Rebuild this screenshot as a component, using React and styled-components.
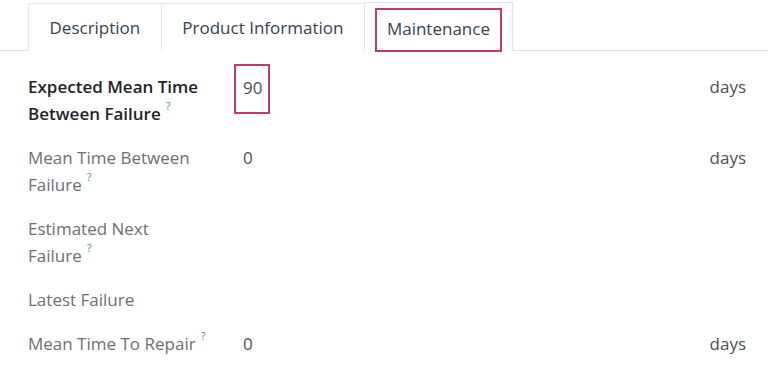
import React from 'react'
import styled, { createGlobalStyle } from 'styled-components'

const GlobalStyle = createGlobalStyle`
    body {
        margin: 0;
        background: #fff;
        font-family: "Open Sans", "Noto Sans", sans-serif;
    }
`

const fields = [
    { label: 'Expected Mean Time Between Failure', help: true, value: '90', unit: 'days', strong: true, focused: true },
    { label: 'Mean Time Between Failure', help: true, value: '0', unit: 'days' },
    { label: 'Estimated Next Failure', help: true },
    { label: 'Latest Failure' },
    { label: 'Mean Time To Repair', help: true, value: '0', unit: 'days', wide: true },
]

function FieldLabel({ text, help }) {
    const words = text.split(' ')
    const last = words.pop()
    return (
        <LabelText>
            {words.join(' ')}{' '}
            <NoWrap>
                {last}
                {help && <Help>?</Help>}
            </NoWrap>
        </LabelText>
    )
}

function App() {
    return (
        <Page>
            <GlobalStyle />
            <Tabs>
                <Tab>Description</Tab>
                <Tab>Product Information</Tab>
                <Tab active>
                    <Highlight>Maintenance</Highlight>
                </Tab>
            </Tabs>
            <Form>
                {fields.map((f) => (
                    <Row key={f.label}>
                        <Label strong={f.strong} wide={f.wide}>
                            <FieldLabel text={f.label} help={f.help} />
                        </Label>
                        <Value focused={f.focused}>{f.value}</Value>
                        <Unit>{f.unit}</Unit>
                    </Row>
                ))}
            </Form>
        </Page>
    )
}

export default App

const Page = styled.div`
    width: 768px;
    height: 382px;
    overflow: hidden;
`

const Tabs = styled.div`
    display: flex;
    padding: 2px 0 0 28px;
    border-bottom: 1px solid #dee2e6;
    height: 48px;
    box-sizing: content-box;
`

const Tab = styled.div`
    display: flex;
    align-items: center;
    justify-content: center;
    padding: ${(p) => (p.active ? '0 10px' : '0 20.5px')};
    margin-top: ${(p) => (p.active ? '0' : '1px')};
    border: 1px solid #e6e8eb;
    border-bottom: none;
    border-right: ${(p) => (p.active ? '1px solid #e6e8eb' : 'none')};
    font-size: 17px;
    color: #374151;
    background: #fff;
    margin-bottom: -1px;
    ${(p) => p.active && 'border-color: #dee2e6;'}
`

const Highlight = styled.div`
    border: 2px solid #c2396b;
    padding: 0 10px 3px;
    height: 44px;
    margin-top: 5px;
    display: flex;
    align-items: center;
    box-sizing: border-box;
`

const Form = styled.div`
    display: flex;
    flex-direction: column;
    gap: 17px;
    padding: 22px 22px 0 28px;
`

const Row = styled.div`
    display: grid;
    grid-template-columns: 205px 1fr auto;
    align-items: start;
`

const Label = styled.div`
    font-size: 17px;
    line-height: 27px;
    color: ${(p) => (p.strong ? '#1f2328' : '#6c6f73')};
    font-weight: ${(p) => (p.strong ? 600 : 400)};
    white-space: ${(p) => (p.wide ? 'nowrap' : 'normal')};
`

const LabelText = styled.div`
    max-width: 175px;
`

const NoWrap = styled.span`
    white-space: nowrap;
`

const Help = styled.span`
    display: inline-block;
    color: #3e8fb8;
    font-size: 11px;
    font-weight: 400;
    line-height: 12px;
    margin-left: 5px;
    vertical-align: top;
`

const Value = styled.div`
    font-size: 17px;
    line-height: 27px;
    color: #4b5157;
    padding: 0 8px;
    margin-left: 2px;
    width: fit-content;
    ${(p) => p.focused && `
        border: 2px solid #c2396b;
        margin: -9px 0 0 1px;
        padding: 8px 6px 11px 7px;
    `}
`

const Unit = styled.div`
    font-size: 17px;
    line-height: 27px;
    color: #4b5157;
`
